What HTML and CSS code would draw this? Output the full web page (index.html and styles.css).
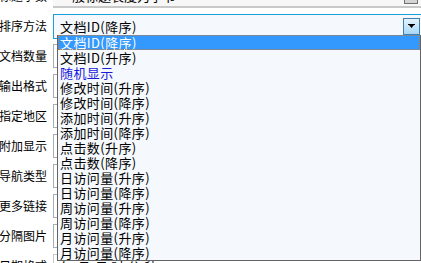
FILE: index.html
```html
<!DOCTYPE html>
<html lang="zh-CN">
<head>
    <meta charset="UTF-8">
    <title>调用设置</title>
    <link rel="stylesheet" href="styles.css">
</head>
<body>
    <div class="page">
    <div class="form">
        <div class="row">
            <div class="lbl">标题字数</div>
            <div class="field field-top">
                <span class="field-text">一般标题长度为字节</span>
                <span class="mini-btn"></span>
            </div>
        </div>

        <div class="row">
            <div class="lbl">排序方法</div>
            <div class="select">
                <span class="select-text">文档ID(降序)</span>
                <span class="select-btn">
                    <svg width="7" height="5" viewBox="0 0 7 5"><path d="M0 0H7V1H6L3.5 4L1 1H0Z" fill="#000"/></svg>
                </span>
                <ul class="options">
                    <li class="active">文档ID(降序)</li>
                    <li>文档ID(升序)</li>
                    <li class="special">随机显示</li>
                    <li>修改时间(升序)</li>
                    <li>修改时间(降序)</li>
                    <li>添加时间(升序)</li>
                    <li>添加时间(降序)</li>
                    <li>点击数(升序)</li>
                    <li>点击数(降序)</li>
                    <li>日访问量(升序)</li>
                    <li>日访问量(降序)</li>
                    <li>周访问量(升序)</li>
                    <li>周访问量(降序)</li>
                    <li>月访问量(升序)</li>
                    <li>月访问量(降序)</li>
                </ul>
            </div>
        </div>

        <div class="row"><div class="lbl">文档数量</div><div class="field"></div></div>
        <div class="row"><div class="lbl">输出格式</div><div class="field"></div></div>
        <div class="row"><div class="lbl">指定地区</div><div class="field"></div></div>
        <div class="row"><div class="lbl">附加显示</div><div class="field"></div></div>
        <div class="row"><div class="lbl">导航类型</div><div class="field"></div></div>
        <div class="row"><div class="lbl">更多链接</div><div class="field"></div></div>
        <div class="row"><div class="lbl">分隔图片</div><div class="field"></div></div>
        <div class="row">
            <div class="lbl">日期格式</div>
            <div class="field field-plain">
                <span class="field-text">年-月-日 时:分:秒</span>
            </div>
        </div>
    </div>
    </div>
</body>
</html>
```

FILE: styles.css
```css
body {
    margin: 0;
    background: #fff;
    font-family: "Noto Sans CJK SC", "Liberation Sans", sans-serif;
    color: #000;
    overflow: hidden;
}

.page {
    height: 263px;
    overflow: hidden;
}

.form {
    margin-top: -16px;
    display: flex;
    flex-direction: column;
    gap: 6px;
}

.row {
    display: flex;
    align-items: center;
    gap: 6px;
    height: 24px;
}

.lbl {
    width: 47px;
    flex: none;
    display: flex;
    justify-content: flex-end;
    white-space: nowrap;
    font-size: 12px;
    line-height: 14px;
}

.field {
    flex: 1;
    height: 22px;
    border: 1px solid #a8adb3;
    border-right: none;
    background: #fff;
    display: flex;
    align-items: center;
    padding-left: 6px;
    font-size: 13px;
}

.field-top {
    background: #f7f7f7;
    border: none;
    border-bottom: 2px solid #c8c8c8;
    position: relative;
}

.field-plain {
    border-color: #c8c8c8;
}

.field-text {
    white-space: nowrap;
}

.mini-btn {
    position: absolute;
    right: 3px;
    top: 8px;
    width: 12px;
    height: 10px;
    border: 1px solid #707070;
    background: #d4d4d4;
}

.select {
    flex: 1;
    height: 23px;
    border: 1px solid #1aa0d6;
    border-right: none;
    background: #f5f8fc;
    position: relative;
    display: flex;
    align-items: center;
    padding-left: 6px;
    font-size: 13px;
    letter-spacing: 0.4px;
}

.select-text {
    flex: 1;
    line-height: 15px;
}

.select-btn {
    width: 15px;
    height: 15px;
    margin-right: 1px;
    border: 1px solid #3c80b4;
    background: linear-gradient(#e6f3fc, #a8d8f5);
    display: flex;
    align-items: center;
    justify-content: center;
}

.options {
    position: absolute;
    top: 20px;
    left: 3px;
    right: 0;
    margin: 0;
    padding: 0;
    list-style: none;
    background: #f5f8fc;
    border: 1px solid #646464;
    border-top: none;
    z-index: 10;
}

.options li {
    height: 15px;
    line-height: 15px;
    padding-left: 2px;
    white-space: nowrap;
}

.options li.active {
    background: #3399ff;
    color: #fff;
    outline: 1px dotted #c27a35;
    outline-offset: -1px;
}

.options li.special {
    color: #1a1adb;
}
```
